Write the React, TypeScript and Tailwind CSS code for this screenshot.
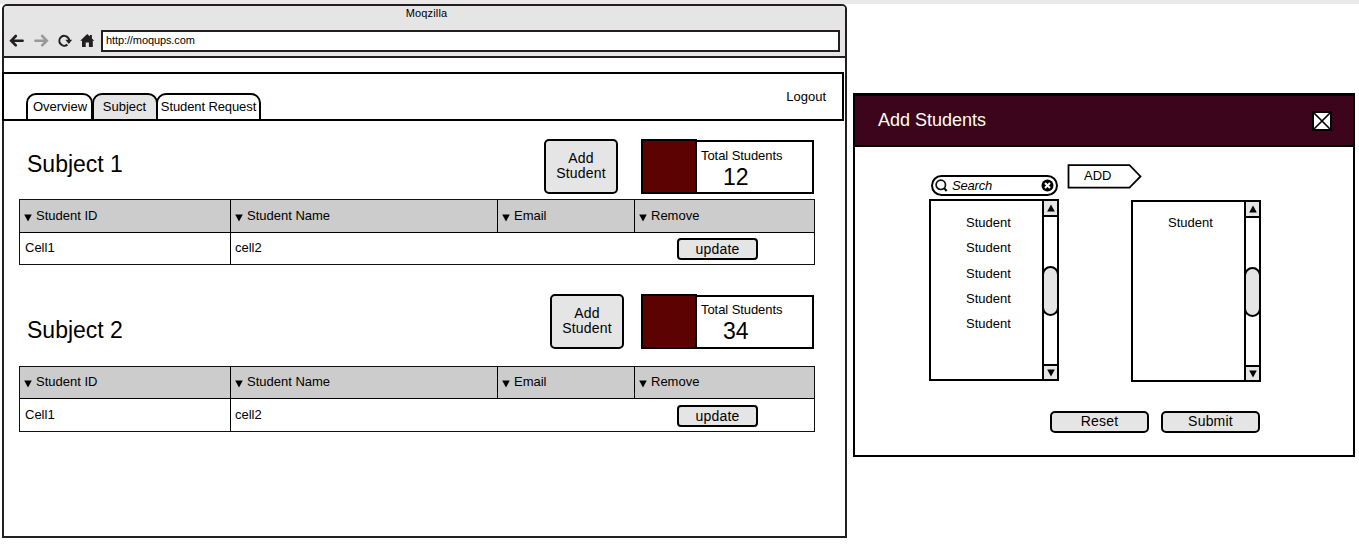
import React from "react";

const columns = [
  { label: "Student ID", width: "w-[211px]" },
  { label: "Student Name", width: "w-[267px]" },
  { label: "Email", width: "w-[137px]" },
  { label: "Remove", width: "w-[179px]" },
];

function Triangle({ up = false, className = "" }: { up?: boolean; className?: string }) {
  return (
    <svg width="8" height="8" viewBox="0 0 8 8" className={className}>
      <path d={up ? "M4 0.5L7.8 7.5H0.2Z" : "M4 7.5L7.8 0.5H0.2Z"} fill="#000" />
    </svg>
  );
}

function BrowserIcons() {
  return (
    <svg width="90" height="18" viewBox="0 0 90 18" fill="none" className="shrink-0">
      <g strokeWidth="2.6" strokeLinecap="round">
        <path d="M6.8 4L2.2 8.7L6.8 13.4M2.4 8.7H13.6" stroke="#231f20" />
        <path d="M33.2 4L37.8 8.7L33.2 13.4M37.6 8.7H26.4" stroke="#999" />
      </g>
      <path d="M58.4 12.6A4.9 4.9 0 1 1 59 5.6Q60.2 7 60.2 8.7" stroke="#231f20" strokeWidth="2.1" />
      <path d="M56.4 7.8H63.2L59.8 11.9Z" fill="#231f20" />
      <path d="M71.2 8.8L78.2 2.1L80.8 4.5V2.9H82.9V6.5L85.3 8.8H83.8V15H79.9V10.6H76.7V15H73V8.8Z" fill="#231f20" />
    </svg>
  );
}

function SubjectTable({ headerClass, rowClass }: { headerClass: string; rowClass: string }) {
  return (
    <div className="flex h-[66px] w-[796px] flex-col border border-[#111]">
      <div className={`flex shrink-0 border-b border-black bg-[#ccc] ${headerClass}`}>
        {columns.map((c, i) => (
          <div
            key={c.label}
            className={`flex shrink-0 items-center gap-[4px] pb-px pl-[4px] text-[13px] ${c.width} ${i < 3 ? "border-r border-black" : ""}`}
          >
            <Triangle className="mt-[4px]" />
            <span>{c.label}</span>
          </div>
        ))}
      </div>
      <div className="flex flex-1 text-[13px] leading-[20px]">
        <div className={`w-[211px] border-r border-black pl-[5px] ${rowClass}`}>Cell1</div>
        <div className={`w-[404px] pl-[4px] ${rowClass}`}>cell2</div>
        <div className={`flex-1 pl-[42px] ${rowClass}`}>
          <button className="flex h-[22px] w-[81px] items-center justify-center rounded-[4px] border-2 border-black bg-[#e5e5e5] pb-px text-[14px] tracking-[0.2px]">
            update
          </button>
        </div>
      </div>
    </div>
  );
}

interface SubjectProps {
  name: string;
  total: number;
  className: string;
  titleClass: string;
  statClass: string;
  tableGap: string;
  headerClass: string;
  rowClass: string;
}

function Subject({ name, total, className, titleClass, statClass, tableGap, headerClass, rowClass }: SubjectProps) {
  return (
    <section className={className}>
      <div className="flex h-[55px]">
        <h2 className={`whitespace-nowrap pl-[8px] text-[23px] leading-[28px] ${titleClass}`}>{name}</h2>
        <button className="h-[55px] w-[74px] shrink-0 rounded-[5px] border-2 border-black bg-[#e5e5e5] pb-px text-[14px] leading-[15px] tracking-[0.2px]">
          Add
          <br />
          Student
        </button>
        <div className="ml-auto mr-px flex h-[55px] items-end">
          <div className="h-[55px] w-[56px] border-2 border-black bg-[#5c0202]" />
          <div className={`h-[54px] w-[117px] border-y-2 border-r-2 border-black pl-[4px] ${statClass}`}>
            <div className="whitespace-nowrap text-[13px] leading-[16px] tracking-[-0.07px]">Total Students</div>
            <div className="pl-[22px] text-[23px] leading-[26px]">{total}</div>
          </div>
        </div>
      </div>
      <div className={tableGap}>
        <SubjectTable headerClass={headerClass} rowClass={rowClass} />
      </div>
    </section>
  );
}

function StudentList({ count, className, listClass }: { count: number; className: string; listClass: string }) {
  return (
    <div className={`flex h-[182px] w-[130px] border-2 border-black bg-white ${className}`}>
      <div className={`flex flex-1 flex-col items-center pl-[4px] text-[13px] ${listClass}`}>
        {Array.from({ length: count }, (_, i) => (
          <div key={i} className="h-[25.3px] leading-[26px]">
            Student
          </div>
        ))}
      </div>
      <div className="flex w-[15px] flex-col border-l-2 border-black">
        <div className="flex h-[16px] items-center justify-center border-b-2 border-black bg-[#e5e5e5]">
          <Triangle up />
        </div>
        <div className="h-[49px]" />
        <div className="-ml-[2px] -mr-[2px] h-[50px] rounded-full border-2 border-black bg-[#e5e5e5]" />
        <div className="flex-1" />
        <div className="flex h-[15px] items-center justify-center border-t-2 border-black bg-[#e5e5e5]">
          <Triangle />
        </div>
      </div>
    </div>
  );
}

function BrowserWindow() {
  return (
    <main className="ml-[2px] h-[534px] w-[845px] shrink-0 rounded-t-[5px] border-2 border-[#231f20] bg-white">
      <header className="h-[52px] rounded-t-[3px] border-b-2 border-[#231f20] bg-[#e5e5e5]">
        <div className="h-[24px] pl-[4px] text-center text-[11px] leading-[14px] tracking-[0.15px]">Moqzilla</div>
        <div className="flex items-center">
          <div className="pl-[5px] pr-[2px]">
            <BrowserIcons />
          </div>
          <div className="h-[22px] w-[739px] border-2 border-[#231f20] bg-white pl-[3px] text-[11px] leading-[17px] tracking-[-0.1px]">
            http://moqups.com
          </div>
        </div>
      </header>
      <nav className="-ml-[2px] mt-[14px] flex h-[49px] w-[842px] items-end border-2 border-black text-[13px]">
        <div className="-mb-[2px] ml-[22px] flex h-[28px] leading-[24px]">
          <div className="w-[67px] rounded-t-[10px] border-2 border-black pl-px text-center">Overview</div>
          <div className="-ml-[1px] w-[66px] rounded-t-[10px] border-2 border-black bg-[#e5e5e5] pr-px text-center">
            Subject
          </div>
          <div className="-ml-[2px] w-[105px] whitespace-nowrap rounded-t-[10px] border-2 border-black text-center tracking-[-0.1px]">
            Student Request
          </div>
        </div>
        <div className="mb-[12px] ml-auto mr-[16px] leading-[20px]">Logout</div>
      </nav>
      <Subject
        name="Subject 1"
        total={12}
        className="ml-[15px] mt-[18px] w-[796px]"
        titleClass="w-[525px] pt-[11px]"
        statClass="pt-[6px]"
        tableGap="mt-[5px]"
        headerClass="h-[33px]"
        rowClass="pt-[5px]"
      />
      <Subject
        name="Subject 2"
        total={34}
        className="ml-[15px] mt-[29px] w-[796px]"
        titleClass="w-[531px] pt-[22px]"
        statClass="pt-[5px]"
        tableGap="mt-[17px]"
        headerClass="h-[32px]"
        rowClass="pt-[6px]"
      />
    </main>
  );
}

function AddStudentsDialog() {
  return (
    <aside className="ml-[6px] mt-[89px] h-[364px] w-[502px] shrink-0 border-2 border-t-[3px] border-black bg-white">
      <div className="flex h-[51px] items-center border-b-2 border-black bg-[#3c051b] pl-[23px] pr-[21px]">
        <h1 className="text-[18px] text-[#fffdf0]">Add Students</h1>
        <svg width="20" height="20" viewBox="0 0 20 20" className="ml-auto">
          <rect x="1" y="1" width="18" height="18" fill="#fff" stroke="#000" strokeWidth="2" />
          <path d="M2 2L18 18M18 2L2 18" stroke="#000" strokeWidth="1.7" />
        </svg>
      </div>
      <div className="flex h-[52px] pl-[76px] pt-[17px]">
        <div className="mt-[11px] flex h-[21px] w-[127px] items-center rounded-full border-2 border-black pl-[2px] pr-[2px]">
          <svg width="13" height="13" viewBox="0 0 13 13" fill="none" stroke="#111">
            <circle cx="5.8" cy="5.8" r="4.7" strokeWidth="1.7" />
            <path d="M8.8 8.8L11.7 12" strokeWidth="2.2" />
          </svg>
          <span className="pl-[4px] text-[13px] italic leading-[15px] tracking-[-0.2px]">Search</span>
          <svg width="13" height="13" viewBox="0 0 13 13" className="ml-auto">
            <circle cx="6.5" cy="6.5" r="6" />
            <path d="M4 4L9 9M9 4L4 9" stroke="#fff" strokeWidth="2" />
          </svg>
        </div>
        <div className="ml-[9px] grid h-[25px] w-[76px]">
          <svg width="76" height="25" viewBox="0 0 76 25" className="col-start-1 row-start-1">
            <path d="M1.5 1.2H62.5L73.5 12.4L62.5 23.6H1.5Z" fill="#fff" stroke="#000" strokeWidth="1.8" />
          </svg>
          <span className="col-start-1 row-start-1 pl-[17px] text-[13px] leading-[24px]">ADD</span>
        </div>
      </div>
      <div className="flex h-[212px] gap-[72px] pl-[74px]">
        <StudentList count={5} className="" listClass="pt-[9px]" />
        <StudentList count={1} className="mt-px" listClass="pt-[8px]" />
      </div>
      <div className="flex gap-[12px] pl-[195px] text-[14px] tracking-[0.2px]">
        <button className="h-[22px] w-[99px] rounded-[5px] border-2 border-black bg-[#e5e5e5] pb-[2px] leading-[16px]">
          Reset
        </button>
        <button className="h-[22px] w-[99px] rounded-[5px] border-2 border-black bg-[#e5e5e5] pb-[2px] leading-[16px]">
          Submit
        </button>
      </div>
    </aside>
  );
}

export default function App() {
  return (
    <div className="h-[551px] w-[1359px] overflow-hidden bg-white font-['Liberation_Sans',Arial,sans-serif] text-black">
      <div className="h-[4px] bg-[#e9e9e9]" />
      <div className="flex items-start">
        <BrowserWindow />
        <AddStudentsDialog />
      </div>
    </div>
  );
}
